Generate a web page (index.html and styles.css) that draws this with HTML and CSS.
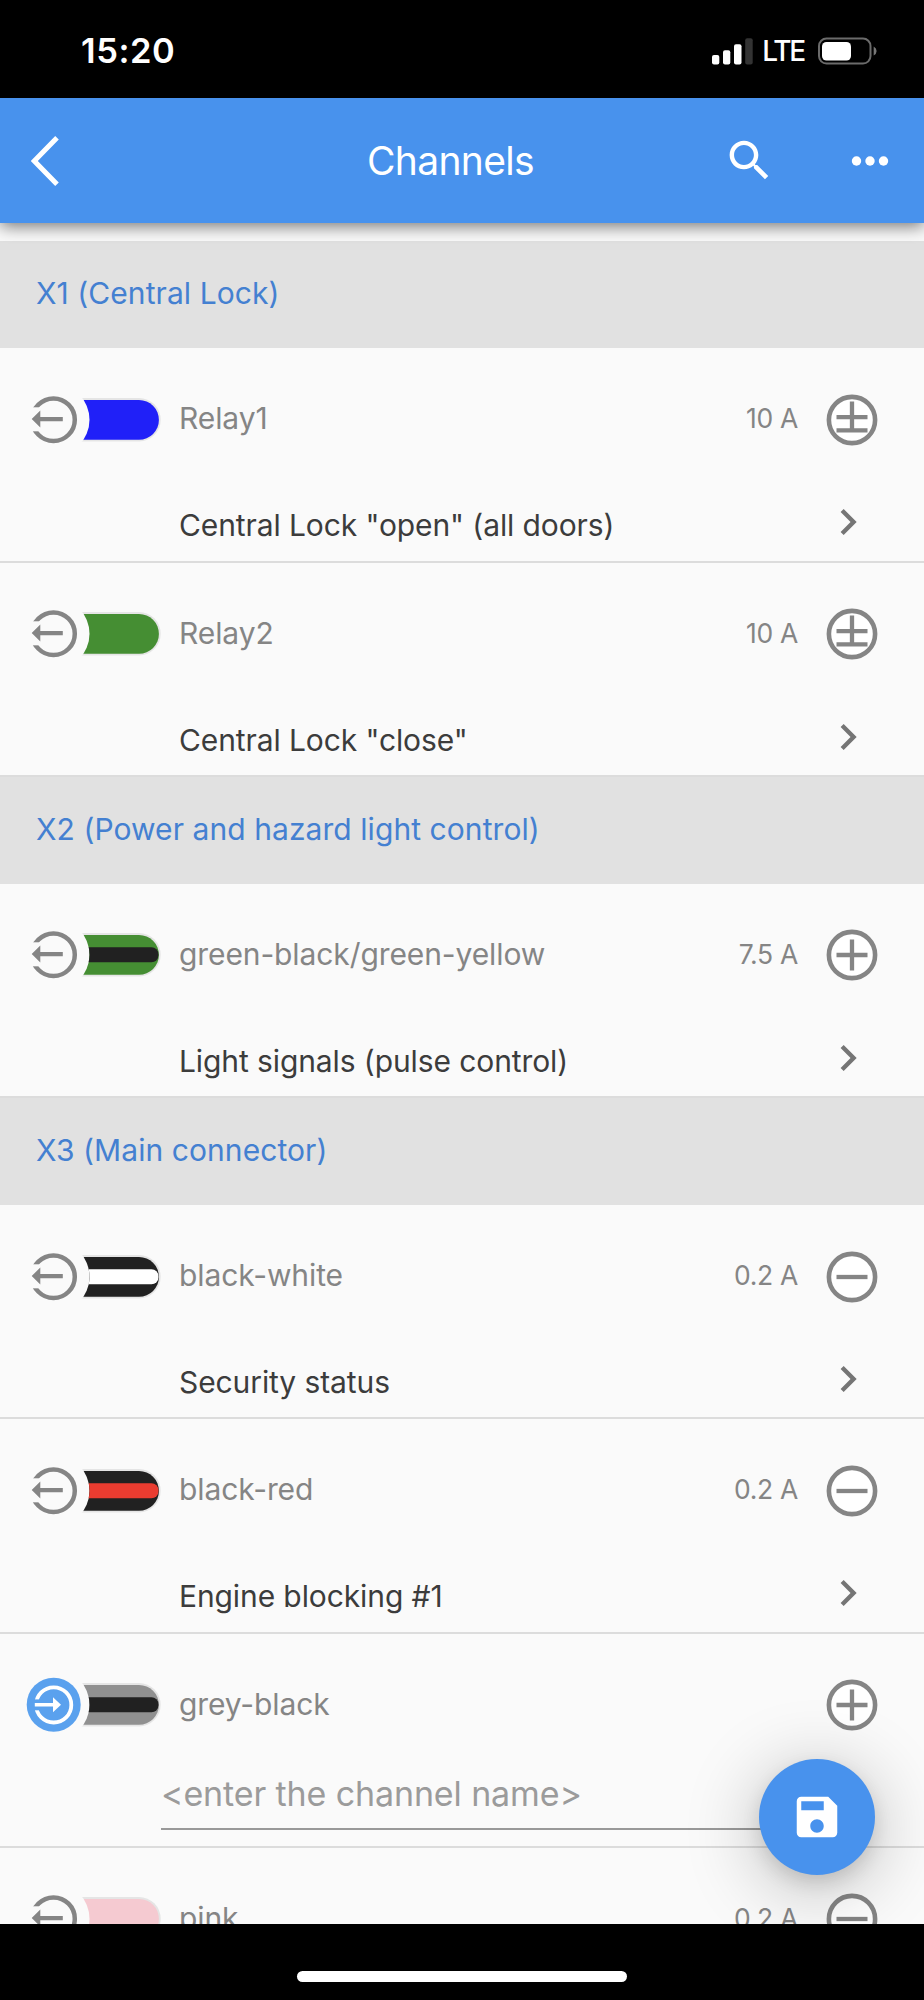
FILE: index.html
```
<!DOCTYPE html>
<html lang="en">
<head>
<meta charset="utf-8">
<title>Channels</title>
<link rel="stylesheet" href="styles.css">
</head>
<body>
<svg class="defs" aria-hidden="true">
  <defs>
    <mask id="ring-gap"><rect width="60" height="80" fill="#fff"/><rect y="27.3" width="25" height="24" fill="#000"/></mask>
    <mask id="ring-gap-in"><rect width="60" height="80" fill="#fff"/><rect y="34.4" width="25" height="10.9" fill="#000"/></mask>
    <mask id="notch"><rect width="150" height="80" fill="#fff"/><circle cx="33.5" cy="39.7" r="36" fill="#000"/></mask>
    <clipPath id="wire-shape"><path d="M40 20H119A19.8 19.8 0 0 1 119 59.8H40Z"/></clipPath>
    <symbol id="out" viewBox="0 0 150 80">
      <circle cx="33.5" cy="39.7" r="21.3" fill="none" stroke="#858585" stroke-width="4.5" mask="url(#ring-gap)"/>
      <path d="M11.7 39L20.3 30.5V37H42.8V41.2H20.3V47.5Z" fill="#858585"/>
    </symbol>
    <symbol id="in" viewBox="0 0 150 80">
      <circle cx="33.7" cy="39.7" r="27" fill="#5aa1ee"/>
      <circle cx="33.7" cy="39.9" r="17.6" fill="none" stroke="#fff" stroke-width="3.8" mask="url(#ring-gap-in)"/>
      <path d="M14.8 38H33V32.3L41 39.8L33 47.3V41.6H14.8Z" fill="#fff"/>
    </symbol>
    <symbol id="wire" viewBox="0 0 150 80">
      <g mask="url(#notch)">
        <path d="M40 18H119A21.7 21.7 0 0 1 119 61.4H40Z" fill="#e5e5e5"/>
        <path d="M40 20H119A19.8 19.8 0 0 1 119 59.8H40Z" fill="currentColor"/>
      </g>
    </symbol>
    <symbol id="stripe" viewBox="0 0 150 80">
      <g mask="url(#notch)"><rect x="40" y="32.2" width="98.5" height="15" rx="7" fill="currentColor" clip-path="url(#wire-shape)"/></g>
    </symbol>
    <symbol id="plus" viewBox="0 0 52 52">
      <circle cx="26" cy="26" r="23.1" fill="#fff" stroke="#858585" stroke-width="4.6"/>
      <path d="M10.5 26H41.5M26 10.4V41.6" stroke="#858585" stroke-width="4.3"/>
    </symbol>
    <symbol id="minus" viewBox="0 0 52 52">
      <circle cx="26" cy="26" r="23.1" fill="#fff" stroke="#858585" stroke-width="4.6"/>
      <path d="M10.5 26H41.5" stroke="#858585" stroke-width="4.3"/>
    </symbol>
    <symbol id="plusminus" viewBox="0 0 52 52">
      <circle cx="26" cy="26" r="23.1" fill="#fff" stroke="#858585" stroke-width="4.6"/>
      <path d="M10.5 23.2H41.5M10.5 36.4H41.5M26 7.6V35" stroke="#858585" stroke-width="4.3"/>
    </symbol>
    <symbol id="chevron" viewBox="0 0 24 24"><path d="M10 6L8.59 7.41 13.17 12l-4.58 4.59L10 18l6-6z" fill="#757575"/></symbol>
  </defs>
</svg>
<div class="screen">
  <div class="status">
    <span class="time">15:20</span>
    <div class="status-right">
      <svg width="41" height="28" viewBox="0 0 41 28" fill="#fff"><rect y="18" width="7.3" height="9.5" rx="2"/><rect x="11" y="13.3" width="7.3" height="14.2" rx="2"/><rect x="22" y="7.2" width="7.5" height="20.3" rx="2"/><rect x="33.2" y="1.3" width="7.5" height="26.2" rx="2" fill="#333"/></svg>
      <span class="lte">LTE</span>
      <svg width="60" height="28" viewBox="0 0 60 28"><rect x="1" y="1.6" width="51.5" height="25" rx="7.5" fill="none" stroke="#6b6b6b" stroke-width="2"/><rect x="4" y="5" width="29" height="18.5" rx="4.5" fill="#fff"/><path d="M55.7 9.5Q58.6 11 58.6 14T55.7 18.5Z" fill="#777"/></svg>
    </div>
  </div>
  <header class="appbar">
    <svg class="back" width="30" height="54" viewBox="0 0 30 54"><path d="M26 3.8L3.3 27L26 50.2" fill="none" stroke="#fff" stroke-width="5"/></svg>
    <h1 class="title">Channels</h1>
    <svg class="search" width="53" height="53" viewBox="0 0 24 24"><path fill="#fff" d="M15.5 14h-.79l-.28-.27C15.41 12.59 16 11.11 16 9.5 16 5.91 13.09 3 9.5 3S3 5.91 3 9.5 5.91 16 9.5 16c1.61 0 3.09-.59 4.23-1.57l.27.28v.79l5 4.99L20.49 19l-4.99-5zm-6 0C7.01 14 5 11.99 5 9.5S7.01 5 9.5 5 14 7.01 14 9.5 11.99 14 9.5 14z"/></svg>
    <svg class="more" width="38" height="12" viewBox="0 0 38 12" fill="#fff"><circle cx="5.5" cy="6" r="4.7"/><circle cx="19" cy="6" r="4.7"/><circle cx="32.5" cy="6" r="4.7"/></svg>
  </header>
  <main class="list">
    <h2 class="group">X1 (Central Lock)</h2>
    <section class="row">
      <div class="line1"><svg class="wire c-blue"><use href="#out"/><use href="#wire"/></svg><span class="name">Relay1</span><span class="amp">10 A</span><svg class="pol"><use href="#plusminus"/></svg></div>
      <div class="line2"><span>Central Lock "open" (all doors)</span><svg class="chev"><use href="#chevron"/></svg></div>
    </section>
    <section class="row">
      <div class="line1"><svg class="wire c-green"><use href="#out"/><use href="#wire"/></svg><span class="name">Relay2</span><span class="amp">10 A</span><svg class="pol"><use href="#plusminus"/></svg></div>
      <div class="line2"><span>Central Lock "close"</span><svg class="chev"><use href="#chevron"/></svg></div>
    </section>
    <h2 class="group">X2 (Power and hazard light control)</h2>
    <section class="row">
      <div class="line1"><svg class="wire c-green"><use href="#out"/><use href="#wire"/><use class="c-black" href="#stripe"/></svg><span class="name">green-black/green-yellow</span><span class="amp">7.5 A</span><svg class="pol"><use href="#plus"/></svg></div>
      <div class="line2"><span>Light signals (pulse control)</span><svg class="chev"><use href="#chevron"/></svg></div>
    </section>
    <h2 class="group">X3 (Main connector)</h2>
    <section class="row">
      <div class="line1"><svg class="wire c-black"><use href="#out"/><use href="#wire"/><use class="c-white" href="#stripe"/></svg><span class="name">black-white</span><span class="amp">0.2 A</span><svg class="pol"><use href="#minus"/></svg></div>
      <div class="line2"><span>Security status</span><svg class="chev"><use href="#chevron"/></svg></div>
    </section>
    <section class="row">
      <div class="line1"><svg class="wire c-black"><use href="#out"/><use href="#wire"/><use class="c-red" href="#stripe"/></svg><span class="name">black-red</span><span class="amp">0.2 A</span><svg class="pol"><use href="#minus"/></svg></div>
      <div class="line2"><span>Engine blocking #1</span><svg class="chev"><use href="#chevron"/></svg></div>
    </section>
    <section class="row">
      <div class="line1"><svg class="wire c-grey"><use href="#in"/><use href="#wire"/><use class="c-black" href="#stripe"/></svg><span class="name">grey-black</span><span class="amp"></span><svg class="pol"><use href="#plus"/></svg></div>
      <div class="field">&lt;enter the channel name&gt;</div>
    </section>
    <section class="row">
      <div class="line1"><svg class="wire c-pink"><use href="#out"/><use href="#wire"/></svg><span class="name">pink</span><span class="amp">0.2 A</span><svg class="pol"><use href="#minus"/></svg></div>
    </section>
    <button class="fab" aria-label="Save"><svg width="54" height="54" viewBox="0 0 24 24"><path fill="#fff" d="M17 3H5c-1.11 0-2 .9-2 2v14c0 1.1.89 2 2 2h14c1.1 0 2-.9 2-2V7l-4-4zm-5 16c-1.66 0-3-1.34-3-3s1.34-3 3-3 3 1.34 3 3-1.34 3-3 3zm3-10H5V5h10v4z"/></svg></button>
  </main>
  <footer class="home"><div class="bar"></div></footer>
</div>
</body>
</html>
```
FILE: styles.css
```
* { box-sizing: border-box; margin: 0; padding: 0; }
body { font-family: Inter, "Liberation Sans", sans-serif; background: #000; }
.defs { position: absolute; width: 0; height: 0; }
svg { display: block; flex: none; }
.screen { width: 924px; height: 2000px; display: flex; flex-direction: column; overflow: hidden; }
.status { height: 98px; background: #000; color: #fff; display: flex; align-items: center; justify-content: space-between; padding: 3px 46px 0 81px; }
.time { font-size: 34.5px; font-weight: 600; letter-spacing: .55px; }
.status-right { display: flex; align-items: center; }
.lte { font-size: 28px; font-weight: 500; letter-spacing: -2.2px; margin: 0 14px 0 9px; }
.appbar { position: relative; z-index: 1; height: 125px; background: #4892ed; color: #fff; display: flex; align-items: center; padding-left: 31px; box-shadow: 0 3px 16px rgba(0,0,0,.55); }
.title { flex: 1; margin-left: 306px; font-size: 39px; font-weight: 400; letter-spacing: -.67px; }
.search { margin-right: 75px; }
.more { margin-right: 35px; }
.list { position: relative; flex: 0 0 1700.7px; background: #fafafa; padding-top: 18.2px; overflow: hidden; }
.group { height: 107.1px; background: #e1e1e1; color: #4480d1; font-size: 30px; font-weight: 400; letter-spacing: .07px; line-height: 104px; padding-left: 36px; }
.row { height: 214.25px; border-bottom: 2.3px solid #dcdcdc; }
.line1 { height: 143px; padding-left: 20px; display: flex; align-items: center; }
.wire { width: 150px; height: 80px; }
.name { flex: 1; margin-left: 9px; padding-bottom: 3px; color: #858585; font-size: 30px; letter-spacing: -.1px; }
.amp { padding-bottom: 3px; color: #858585; font-size: 26.5px; letter-spacing: -.3px; }
.pol { width: 52px; height: 52px; margin: 0 45.6px 0 28.4px; }
.line2 { height: 69px; padding: 0 50px 0 179px; display: flex; align-items: center; justify-content: space-between; color: #3c3c3c; font-size: 30px; letter-spacing: -.1px; }
.line2 span { padding-bottom: 1px; }
.chev { width: 52px; height: 52px; margin-bottom: 7px; }
.field { width: 689px; height: 53px; margin-left: 161px; border-bottom: 2px solid #999; color: #9b9b9b; font-size: 34px; letter-spacing: -.12px; line-height: 34px; }
.fab { position: absolute; left: 759px; top: 1536px; width: 116px; height: 116px; border: 0; border-radius: 50%; background: #4892ed; display: flex; align-items: center; justify-content: center; box-shadow: 0 8px 20px -2px rgba(0,0,0,.14), 0 12px 70px 6px rgba(0,0,0,.22); }
.home { flex: 1; background: #000; padding-top: 47px; }
.bar { width: 330px; height: 11px; border-radius: 6px; background: #fff; margin: 0 auto; }
.c-blue { color: #2020f8; }
.c-green { color: #458e33; }
.c-black { color: #212121; }
.c-white { color: #fff; }
.c-red { color: #ea3c30; }
.c-grey { color: #909090; }
.c-pink { color: #f5cad1; }
```
